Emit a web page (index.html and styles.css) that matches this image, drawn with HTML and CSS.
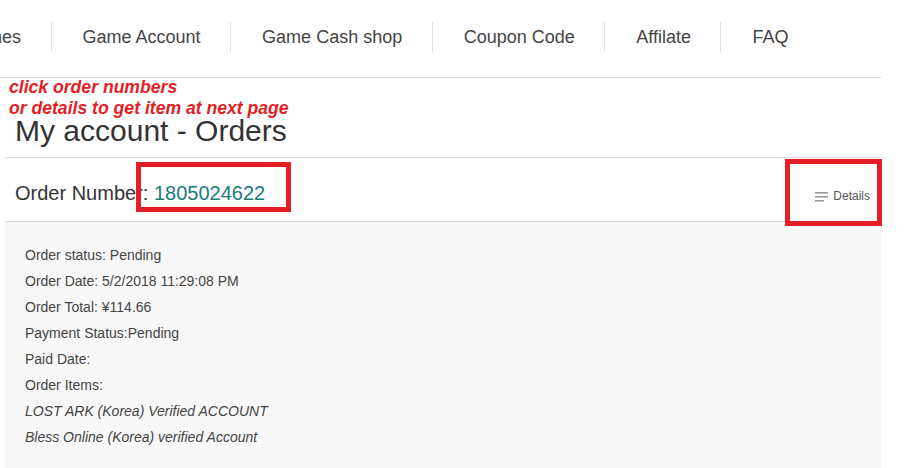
FILE: index.html
```html
<!DOCTYPE html>
<html>
<head>
<meta charset="utf-8">
<link rel="stylesheet" href="styles.css">
</head>
<body>
<div class="page">
  <header class="topbar">
    <ul class="nav">
      <li class="nav-item first">Games</li>
      <li class="nav-item">Game Account</li>
      <li class="nav-item">Game Cash shop</li>
      <li class="nav-item">Coupon Code</li>
      <li class="nav-item">Affilate</li>
      <li class="nav-item">FAQ</li>
    </ul>
  </header>
  <main class="content">
    <h1 class="title">My account - Orders</h1>
    <div class="order-head">
      <div class="order-number">Order Number: <a class="order-link">1805024622</a></div>
      <a class="details">
        <svg class="details-icon" width="13" height="10" viewBox="0 0 13 10">
          <rect x="0" y="0" width="13" height="1.6" fill="#9a9a9a"/>
          <rect x="0" y="4" width="13" height="1.6" fill="#9a9a9a"/>
          <rect x="0" y="8" width="9" height="1.6" fill="#9a9a9a"/>
        </svg>Details</a>
    </div>
    <div class="order-body">
      <p>Order status: Pending</p>
      <p>Order Date: 5/2/2018 11:29:08 PM</p>
      <p>Order Total: ¥114.66</p>
      <p>Payment Status:Pending</p>
      <p>Paid Date:</p>
      <p>Order Items:</p>
      <p class="item">LOST ARK (Korea) Verified ACCOUNT</p>
      <p class="item">Bless Online (Korea) verified Account</p>
    </div>
  </main>
  <div class="note">click order numbers<br>or details to get item at next page</div>
  <div class="mark mark-number"></div>
  <div class="mark mark-details"></div>
</div>
</body>
</html>
```

FILE: styles.css
```css
html, body {
  margin: 0;
  padding: 0;
  background: #fff;
}
body {
  font-family: "Liberation Sans", Arial, sans-serif;
  color: #333;
}
.page {
  position: relative;
  width: 923px;
  height: 468px;
  overflow: hidden;
}
.topbar {
  width: 881px;
  height: 77px;
  border-bottom: 1px solid #dcdcdc;
  overflow: hidden;
}
.nav {
  list-style: none;
  margin: 0 0 0 -68px;
  padding: 22px 0 0 0;
  display: flex;
}
.nav-item {
  height: 30px;
  line-height: 30px;
  font-size: 18px;
  color: #444;
  padding: 0 29.5px 0 31px;
  border-left: 1px solid #e2e2e2;
  white-space: nowrap;
}
.nav-item.first {
  border-left: none;
}
.content {
  margin-left: 5px;
  width: 876px;
}
.title {
  margin: 0;
  padding: 36px 0 9px 10px;
  font-size: 30px;
  line-height: 34px;
  font-weight: normal;
  color: #333;
  border-bottom: 1px solid #dcdcdc;
}
.order-head {
  display: flex;
  justify-content: space-between;
  align-items: baseline;
  padding: 23px 11px 16px 10px;
  border-bottom: 1px solid #dcdcdc;
}
.order-number {
  font-size: 20px;
  line-height: 24px;
  color: #333;
}
.order-link {
  color: #1b7b78;
}
.details {
  font-size: 12px;
  color: #555;
  display: inline-flex;
  align-items: baseline;
}
.details-icon {
  margin-right: 5px;
  align-self: center;
  position: relative;
  top: 1px;
}
.order-body {
  background: #f8f8f8;
  padding: 20px 20px 30px 20px;
  height: 246px;
  box-sizing: border-box;
}
.order-body p {
  margin: 0;
  font-size: 14px;
  line-height: 26px;
  color: #444;
}
.order-body .item {
  font-style: italic;
}
.note {
  position: absolute;
  left: 9px;
  top: 77px;
  font-size: 17.6px;
  line-height: 21px;
  font-weight: bold;
  font-style: italic;
  color: #e31e24;
}
.mark {
  position: absolute;
  border: 5px solid #e31e24;
  box-sizing: border-box;
}
.mark-number {
  left: 136px;
  top: 162px;
  width: 155px;
  height: 50px;
}
.mark-details {
  left: 785px;
  top: 159px;
  width: 97px;
  height: 67px;
}
```
